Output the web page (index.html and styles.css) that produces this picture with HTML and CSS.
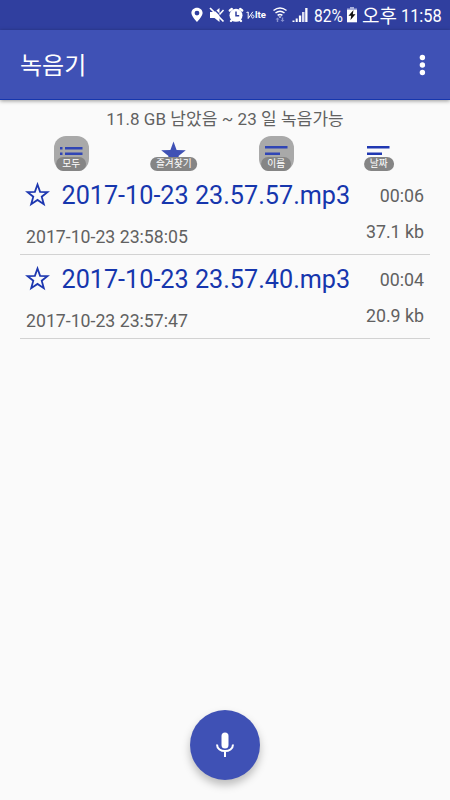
FILE: index.html
```html
<!DOCTYPE html>
<html lang="ko">
<head>
<meta charset="utf-8">
<title>녹음기</title>
<link rel="stylesheet" href="styles.css">
</head>
<body>
<div class="statusbar">
  <svg class="pin" width="12" height="16" viewBox="0 0 12 16"><path fill="#fff" fill-rule="evenodd" d="M6 .8C2.800.8.4 3.100.4 6.100.4 9.400 6 15 6 15s5.600-5.600 5.600-8.900C11.600 3.100 9.200.8 6 .8zm0 2.900a2.400 2.400 0 1 1 0 4.800A2.400 2.400 0 0 1 6 3.700z"/></svg>
  <svg class="mute" width="16" height="16" viewBox="0 0 16 16"><path fill="#fff" d="M1 5h4.500L10.500 1v14l-5-4H1z"/><path stroke="#303f9f" stroke-width="1.400" d="M3 0l13 13"/><path stroke="#fff" stroke-width="1.700" d="M1 1l13.500 13.500"/><path stroke="#fff" stroke-width="1.500" fill="none" d="M10.500 7.500l4-4.500"/></svg>
  <svg class="alarm" width="16" height="16" viewBox="0 0 16 16"><circle cx="8" cy="8.300" r="6.500" fill="#fff"/><path stroke="#fff" stroke-width="2.400" stroke-linecap="round" d="M1.800 3.500l2-1.500M14.200 3.500l-2-1.500M3 14l1-1M13 14l-1-1"/><path fill="none" stroke="#303f9f" stroke-width="1.500" d="M8 4.500v4.300h3.200"/></svg>
  <span class="lte"><svg width="9" height="9" viewBox="0 0 9 9"><path fill="none" stroke="#fff" d="M.5 1.500l1.700-.5v6.500L6.800.8M5.500 5.500c0-2 2.500-2 2.500 0s-2.500 2-2.500 0z"/></svg>lte</span>
  <svg class="wifi" width="16" height="16" viewBox="0 0 16 16"><path fill="none" stroke="#fff" stroke-width="1.500" d="M1.500 3.500c4-3.200 9-3.200 13 0M3.500 6c2.700-2.200 6.300-2.200 9 0M5.600 8.400c1.500-1.200 3.300-1.200 4.800 0"/><path fill="#fff" d="M6.300 9.400h3.400L8 11z"/><path fill="#8992cf" d="M5.500 10.500l2 2H6.200V15H4.800v-2.500H3.500zM9.800 10.500h1.400V13h1.300l-2 2-2-2h1.300z"/></svg>
  <svg class="signal" width="16" height="16" viewBox="0 0 16 16"><path fill="#fff" d="M.5 13.500h2V15h-2zM3.700 11.500h2V15h-2zM6.900 8.500h2.300V15H6.900zM13.200 1h2.300v14h-2.300z"/><path fill="#d8dbf0" d="M10 5h2.500v10H10z"/></svg>
  <span class="percent">82%</span>
  <svg class="battery" width="10" height="16" viewBox="0 0 10 16"><path fill="#a9b0dc" d="M0 1.500h10v2H0zM3 0h4v2H3z"/><path fill="#fff" d="M0 3h10v12.300H0z"/><path fill="#111" d="M6.500 3L1.500 8.800h2.700L3.500 13l5-5.800H5.800z"/></svg>
  <span class="meridiem">오후</span>
  <span class="clock">11:58</span>
</div>
<header class="appbar">
  <h1>녹음기</h1>
  <svg width="8" height="24" viewBox="0 0 8 24"><g fill="#fff"><circle cx="4.400" cy="4.500" r="2.700"/><circle cx="4.400" cy="12" r="2.700"/><circle cx="4.400" cy="19.500" r="2.700"/></g></svg>
</header>
<main>
  <p class="storage">11.8 GB 남았음 ~ 23 일 녹음가능</p>
  <nav class="filters">
    <div class="filter selected">
      <svg width="35" height="35" viewBox="0 0 35 35"><path fill="#3045b5" d="M6 11h2.500v2.500H6zM11 11h17.500v2.500H11zM6 16.500h2.500v2.500H6zM11 16.500h17.500v2.500H11z"/></svg>
      <span>모두</span>
    </div>
    <div class="filter">
      <svg width="35" height="35" viewBox="0 0 35 35"><path fill="#3f51b5" d="M17.500 5.500l3.100 8.500 9.200.3-7.300 5.700 2.600 8.500-7.600-5-7.600 5 2.600-8.500L5.200 14.300l9.200-.3z"/></svg>
      <span>즐겨찾기</span>
    </div>
    <div class="filter selected">
      <svg width="35" height="35" viewBox="0 0 35 35"><path fill="#3045b5" d="M6 10h22.500v2.500H6zM6 16.500h15v2.500H6z"/></svg>
      <span>이름</span>
    </div>
    <div class="filter">
      <svg width="35" height="35" viewBox="0 0 35 35"><path fill="#2038b2" d="M6 10h22.500v2.500H6zM6 16.500h15v2.500H6z"/></svg>
      <span>날짜</span>
    </div>
  </nav>
  <ul class="recordings">
    <li>
      <div class="line top">
        <svg width="26" height="26" viewBox="0 0 26 26"><path fill="none" stroke="#1d37b0" stroke-width="1.800" d="M13.500 2.500l2.600 7.300 7.400.3-5.800 4.600 2.100 7.500-6.300-4.300-6.300 4.300 2.100-7.500-5.800-4.600 7.400-.3z"/></svg>
        <span class="name">2017-10-23 23.57.57.mp3</span>
        <span class="meta">00:06</span>
      </div>
      <div class="line bottom"><span class="date">2017-10-23 23:58:05</span><span class="meta">37.1 kb</span></div>
    </li>
    <li>
      <div class="line top">
        <svg width="26" height="26" viewBox="0 0 26 26"><path fill="none" stroke="#1d37b0" stroke-width="1.800" d="M13.500 2.500l2.600 7.300 7.400.3-5.800 4.600 2.100 7.500-6.300-4.300-6.300 4.300 2.100-7.500-5.800-4.600 7.400-.3z"/></svg>
        <span class="name">2017-10-23 23.57.40.mp3</span>
        <span class="meta">00:04</span>
      </div>
      <div class="line bottom"><span class="date">2017-10-23 23:57:47</span><span class="meta">20.9 kb</span></div>
    </li>
  </ul>
</main>
<button class="record" aria-label="녹음">
  <svg width="24" height="28" viewBox="0 0 24 28"><rect x="8.500" y="1.500" width="7" height="16" rx="3.500" fill="#fff"/><path fill="none" stroke="#fff" stroke-width="2" d="M4 13.500c0 8.800 16 8.800 16 0M12 20v6"/></svg>
</button>
</body>
</html>
```
FILE: styles.css
```css
* { box-sizing: border-box; }
body {
  margin: 0;
  height: 800px;
  display: flex;
  flex-direction: column;
  background: #fafafa;
  font-family: Roboto, "Noto Sans CJK KR", sans-serif;
  color: #616161;
  overflow: hidden;
}
svg { display: block; flex: none; }
.statusbar {
  height: 30px;
  flex: none;
  display: flex;
  align-items: center;
  padding-left: 191px;
  background: #303f9f;
  color: #fff;
  white-space: nowrap;
}
.mute { margin-left: 6px; }
.alarm { margin-left: 3px; }
.lte {
  display: flex;
  align-items: center;
  width: 21px;
  margin-left: 2px;
  font-size: 9.5px;
  font-weight: 700;
  line-height: 10px;
}
.wifi { margin-left: 5px; }
.signal { margin-left: 4px; }
.percent {
  width: 34px;
  margin-left: 6px;
  font-size: 19px;
  transform: scaleX(.82);
  transform-origin: left;
}
.battery { margin-left: -1px; }
.meridiem { width: 38px; margin-left: 5px; padding-top: 3px; font-size: 19px; line-height: 27px; }
.clock {
  margin-left: 1px;
  font-size: 19px;
  transform: scaleX(.86);
  transform-origin: left;
}
.appbar {
  height: 70px;
  flex: none;
  display: flex;
  align-items: center;
  justify-content: space-between;
  padding: 0 24px 0 20px;
  background: #3f51b5;
  border-bottom: 1px solid #1636ad;
  box-shadow: 0 1px 4px rgba(0, 0, 0, .4);
}
h1 { margin: 3px 0 0; font-size: 24px; font-weight: 400; line-height: 36px; color: #fff; }
main { flex: 1; padding: 4px 20px 0; }
.storage { margin: 0; height: 32px; font-size: 17px; letter-spacing: .05px; line-height: 30px; text-align: center; white-space: nowrap; }
.filters { display: grid; grid-template-columns: repeat(4, 1fr); height: 35px; }
.filter { width: 35px; height: 35px; justify-self: center; position: relative; border-radius: 12px; }
.selected { background: #a9a9a9; }
.filter span {
  position: absolute;
  left: 50%;
  bottom: 0;
  transform: translateX(-50%);
  height: 14px;
  padding: 0 6px;
  border-radius: 7px;
  background: #858585;
  color: #fff;
  font-size: 9.7px;
  line-height: 14px;
  white-space: nowrap;
}
.recordings { margin: 0; padding: 0; list-style: none; }
li { height: 84px; border-bottom: 1px solid #d2d2d2; padding: 0 6px 0 4px; }
.line { display: flex; align-items: center; }
.top { height: 48px; }
.name { margin-left: 11.5px; padding-top: 1px; font-size: 25.2px; color: #1636ad; white-space: nowrap; }
.meta { margin-left: auto; font-size: 17.8px; }
.bottom { height: 24px; padding-left: 2px; }
.date { font-size: 17.7px; margin-top: 12px; }
.record {
  align-self: center;
  flex: none;
  width: 70px;
  height: 70px;
  margin-bottom: 20px;
  padding: 0;
  border: 0;
  border-radius: 50%;
  background: #3f51b5;
  display: flex;
  align-items: center;
  justify-content: center;
  box-shadow: 0 5px 9px rgba(0, 0, 0, .25);
}
```
